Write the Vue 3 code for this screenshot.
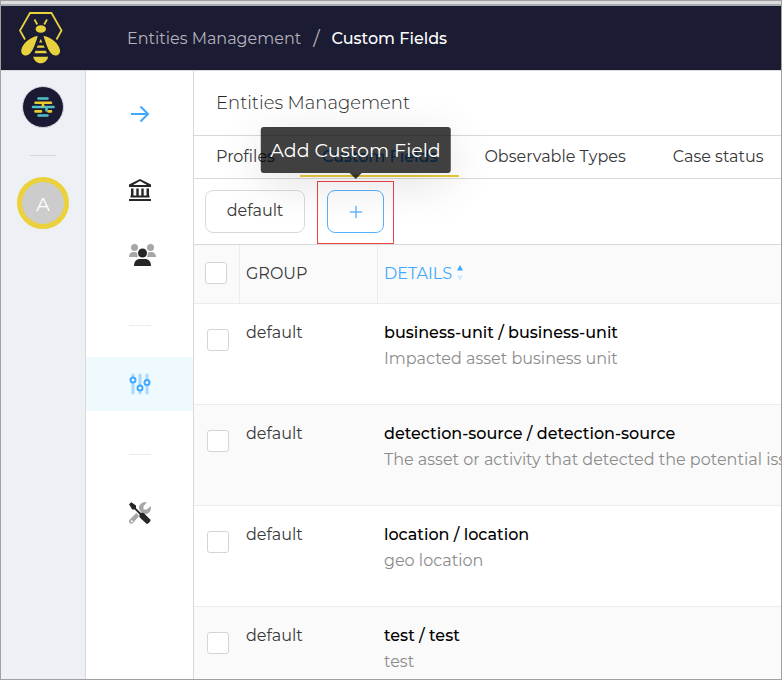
<script setup>
import { ref } from 'vue'

const tabs = ['Profiles', 'Custom Fields', 'Observable Types', 'Case status']
const activeTab = ref('Custom Fields')

const rows = ref([
  { group: 'default', name: 'business-unit / business-unit', description: 'Impacted asset business unit', checked: false },
  { group: 'default', name: 'detection-source / detection-source', description: 'The asset or activity that detected the potential issue', checked: false },
  { group: 'default', name: 'location / location', description: 'geo location', checked: false },
  { group: 'default', name: 'test / test', description: 'test', checked: false },
])
</script>

<template>
  <div class="window">
    <div class="chrome"></div>
    <header class="topbar">
      <a href="#" class="brand" aria-label="Home">
        <svg width="44" height="52" viewBox="0 0 44 52" fill="none">
          <path d="M6 27.500 1 18.500 11 1h21.500L42.500 18.500l-5 9" stroke="#e8d13f" stroke-width="1.800" />
          <path d="m15.500 7.500 2.800 5M28 7.500l-2.800 5" stroke="#e8d13f" stroke-width="1.800" />
          <ellipse cx="21.800" cy="17" rx="5.200" ry="3.800" fill="#e8d13f" />
          <path d="M18.800 24C11 25 3.500 31.500 2.300 38c-.5 3.500 1.700 5.500 4.700 5.500C12.500 43.500 16 33 18.800 24ZM24.500 24C32.300 25 39.800 31.500 41 38c.5 3.500-1.700 5.500-4.700 5.500C30.800 43.500 27.300 33 24.500 24Z" fill="#e8d13f" />
          <path d="m21.700 27 1.600 3.500h-3.200ZM18.700 33.500h6l1 2.300h-8ZM16.500 38.800h10.400l1 2.500H15.500ZM14.200 44.800h15c-1 4-3.700 6.500-7.500 6.500s-6.500-2.500-7.500-6.500Z" fill="#e8d13f" />
        </svg>
      </a>
      <nav class="breadcrumb" aria-label="Breadcrumb">
        <a href="#">Entities Management</a>
        <span class="slash">/</span>
        <span class="current">Custom Fields</span>
      </nav>
    </header>

    <div class="body">
      <aside class="rail">
        <a href="#" class="org" aria-label="Organisation">
          <svg width="42" height="42" viewBox="0 0 42 42">
            <circle cx="21" cy="21" r="20.500" fill="#1a1a35" stroke="#d5d6da" />
            <g stroke-width="2.600" stroke-linecap="round">
              <path d="M16.500 12.500h9M11 21h20.500M16.500 29.500h9M24.500 21v3.500" stroke="#4fc0c4" />
              <path d="M13.500 16.700h15.500M13.500 25.400h5.500M26.500 25.400h2.500M21 17v3" stroke="#eccb2e" />
            </g>
          </svg>
        </a>
        <hr class="rail-line" />
        <button type="button" class="avatar">A</button>
      </aside>

      <nav class="sidebar" aria-label="Administration">
        <a href="#" class="item first" aria-label="Expand">
          <svg width="22" height="22" viewBox="0 0 22 22" fill="none" stroke="#40a9ff" stroke-width="2">
            <path d="M2 11h17M11.500 3.500 19 11l-7.500 7.500" />
          </svg>
        </a>
        <a href="#" class="item" aria-label="Organisations">
          <svg width="22" height="22" viewBox="0 0 22 22" fill="#262626">
            <path fill-rule="evenodd" d="M11 0 0 5.500V8h22V5.500ZM11 2l7 4H4Z" />
            <path d="M2 9.500h2.500V17H2ZM7.300 9.500h2.400V17H7.300ZM12.300 9.500h2.400V17h-2.400ZM17.500 9.500H20V17h-2.500ZM1.500 16.500h19v2h-19ZM0 20h22v2H0Z" />
          </svg>
        </a>
        <a href="#" class="item users" aria-label="Users">
          <svg width="27" height="22" viewBox="0 0 27 22">
            <g fill="#a6a6a6">
              <circle cx="5.500" cy="3.500" r="3.500" />
              <circle cx="21.500" cy="3.500" r="3.500" />
              <path d="M0 13c0-3 2-5 4.500-5H6c1 0 1.700.3 2.300.8-.3 1.600 0 3 .7 4.200ZM27 13c0-3-2-5-4.500-5H21c-1 0-1.700.3-2.300.8.3 1.600 0 3-.7 4.200Z" />
            </g>
            <circle cx="13.500" cy="9" r="4.500" fill="#262626" />
            <path d="M5 22c0-4.500 2.500-7 6-7h5c3.500 0 6 2.500 6 7Z" fill="#262626" />
          </svg>
        </a>
        <hr class="divider" />
        <a href="#" class="item selected" aria-label="Entities Management">
          <svg width="22" height="22" viewBox="0 0 22 22" fill="none">
            <path d="M4 2v18M11 2v18M18 2v18" stroke="#a8d8ff" stroke-width="3" stroke-linecap="round" />
            <g fill="#f0faff" stroke="#40a9ff" stroke-width="2">
              <circle cx="4" cy="7" r="2.500" />
              <circle cx="11" cy="15" r="2.500" />
              <circle cx="18" cy="9.500" r="2.500" />
            </g>
          </svg>
        </a>
        <hr class="divider" />
        <a href="#" class="item" aria-label="Platform tools">
          <svg width="22" height="22" viewBox="0 0 22 22">
            <path d="M10 6C10 2 14 -1 18 .6L14.500 4v3.500H18L21.500 4C23 8 20 12 16 12l-2.500-.5L10.500 8ZM7.300 11 10 14l-6 7C1.500 23 -1.500 20 .8 17.500Z" fill="#a6a6a6" />
            <circle cx="2.800" cy="19.200" r="1" fill="#fff" />
            <path d="m0 2.300 2.300-2L7 3.500v2.700l5 4.800c1.500-.5 2.500-.3 3.500.7l6 6-.2 1.500-2.400 2.500h-1.400L11.300 16c-1-1-1.200-2.400-.7-3.600L5.700 7.500H3.200Z" fill="#262626" />
          </svg>
        </a>
      </nav>

      <main class="content">
        <h1 class="title">Entities Management</h1>
        <nav class="tabs" aria-label="Entity sections">
          <button
            v-for="tab in tabs"
            :key="tab"
            type="button"
            class="tab"
            :class="{ active: tab === activeTab }"
            @click="activeTab = tab"
          >{{ tab }}</button>
        </nav>

        <div class="toolbar">
          <button type="button" class="preset">default</button>
          <div class="highlight">
            <button type="button" class="add" aria-label="Add Custom Field">
              <svg width="12" height="12" viewBox="0 0 12 12" stroke="#69b9fc" stroke-width="1.500">
                <path d="M6 0v12M0 6h12" />
              </svg>
            </button>
            <div class="tooltip" role="tooltip">Add Custom Field</div>
          </div>
        </div>

        <table class="fields">
          <thead>
            <tr>
              <th class="pick"><input type="checkbox" aria-label="Select all" /></th>
              <th class="group">GROUP</th>
              <th class="details">
                <button type="button" class="sort">
                  DETAILS
                  <svg width="6" height="16" viewBox="0 0 6 16">
                    <path d="M3 0 6 5.500H0Z" fill="#40a9ff" />
                    <path d="M3 16 0 10.500h6Z" fill="#d3eafd" />
                  </svg>
                </button>
              </th>
            </tr>
          </thead>
          <tbody>
            <tr v-for="row in rows" :key="row.name">
              <td class="pick"><input v-model="row.checked" type="checkbox" :aria-label="'Select ' + row.name" /></td>
              <td class="group">{{ row.group }}</td>
              <td class="details">
                <div class="name">{{ row.name }}</div>
                <div class="description">{{ row.description }}</div>
              </td>
            </tr>
          </tbody>
        </table>
      </main>
    </div>
  </div>
</template>

<style>
body {
  margin: 0;
  background: #fff;
}
</style>

<style scoped>
.window,
.window * {
  box-sizing: border-box;
}
.window {
  display: flex;
  flex-direction: column;
  height: 100vh;
  overflow: hidden;
  border: 1px solid #a0a0a0;
  background: #fff;
  color: #383838;
  font-family: Montserrat, Inter, sans-serif;
  font-size: 16px;
  font-weight: 400;
  line-height: 26px;
}
button {
  margin: 0;
  padding: 0;
  border: 0;
  background: none;
  color: inherit;
  font: inherit;
  cursor: pointer;
}
a {
  color: inherit;
  text-decoration: none;
}
hr {
  margin: 0;
  border: 0;
}
svg {
  display: block;
}
.chrome {
  flex: none;
  height: 5px;
  background: #dcdcde;
  border-bottom: 2px solid #a8abb0;
}
.topbar {
  flex: none;
  display: flex;
  align-items: center;
  gap: 64px;
  height: 65px;
  padding: 0 18px;
  background: #1b1b33;
  border-bottom: 1px solid #d9d9d9;
}
.breadcrumb {
  display: flex;
  gap: 12px;
  padding-top: 2px;
  color: #b3b3bb;
}
.slash {
  font-size: 19px;
}
.current {
  color: #fff;
  font-weight: 500;
}
.body {
  flex: 1;
  display: flex;
  min-height: 0;
}
.rail {
  flex: none;
  display: flex;
  flex-direction: column;
  align-items: center;
  width: 85px;
  padding-top: 15px;
  background: #edf1f5;
  border-right: 1px solid #d9d9d9;
}
.rail-line {
  width: 26px;
  height: 1px;
  margin: 27px 0 21px;
  background: #d3d6d9;
}
.avatar {
  width: 52px;
  height: 52px;
  padding-top: 4px;
  border: 5px solid #ebd13c;
  border-radius: 50%;
  background: #ccc;
  color: #fff;
  font-size: 19px;
}
.sidebar {
  flex: none;
  width: 108px;
  border-right: 1px solid #d9d9d9;
}
.item {
  display: flex;
  align-items: center;
  justify-content: center;
  height: 54px;
}
.first {
  margin: 16px 0 22px;
}
.users {
  margin-top: 11px;
  padding-left: 5px;
}
.divider {
  width: 22px;
  height: 1px;
  margin: 43px auto 31px;
  background: #ececec;
}
.selected {
  background: #effaff;
}
.content {
  flex: 1;
  min-width: 0;
  overflow: hidden;
}
.title {
  margin: 0;
  padding: 19px 22px;
  border-bottom: 1px solid #d9d9d9;
  color: #262626;
  font-size: 18px;
  font-weight: 300;
}
.tabs {
  display: flex;
  gap: 3px;
  height: 43px;
  border-bottom: 1px solid #d9d9d9;
}
.tab {
  flex: none;
  height: 41px;
  padding: 2px 22px 0;
  border-bottom: 2px solid transparent;
  white-space: nowrap;
}
.tab.active {
  border-bottom-color: #e8cb38;
  color: #1890ff;
  font-weight: 500;
}
.toolbar {
  display: flex;
  align-items: flex-start;
  gap: 12px;
  height: 66px;
  padding: 2px 11px 0;
  border-bottom: 1px solid #d9d9d9;
}
.preset {
  width: 100px;
  height: 43px;
  margin-top: 9px;
  padding-bottom: 1px;
  border: 1px solid #d9d9d9;
  border-radius: 8px;
}
.highlight {
  position: relative;
  padding: 8px 9px 10px;
  border: 1px solid #ef4444;
}
.add {
  display: flex;
  align-items: center;
  justify-content: center;
  width: 57px;
  height: 43px;
  border: 1px solid #57b2fd;
  border-radius: 8px;
}
.tooltip {
  position: absolute;
  bottom: calc(100% + 9px);
  left: 50%;
  transform: translateX(-50%);
  padding: 11px 10px 9px;
  border-radius: 3px;
  background: rgba(0, 0, 0, 0.75);
  box-shadow: 0 10px 48px rgba(0, 0, 0, 0.12);
  color: #fff;
  font-size: 19px;
  white-space: nowrap;
}
.tooltip::after {
  content: "";
  position: absolute;
  top: 100%;
  left: 50%;
  margin-left: -6px;
  border: 6px solid transparent;
  border-top-color: rgba(0, 0, 0, 0.75);
  border-bottom: 0;
}
.fields {
  width: 100%;
  table-layout: fixed;
  border-collapse: separate;
  border-spacing: 0;
}
th {
  height: 59px;
  padding: 0 6px;
  border-bottom: 1px solid #ececec;
  background: #fafafa;
  font-weight: 400;
  text-align: left;
}
th.pick,
th.group {
  border-right: 1px solid #ececec;
}
th.pick {
  width: 46px;
  padding: 0 0 2px 11px;
}
th.group {
  width: 138px;
}
.sort {
  display: flex;
  align-items: center;
  gap: 5px;
  color: #40a9ff;
}
.sort svg {
  margin-bottom: 3px;
}
td {
  height: 101px;
  padding: 16px 6px 0;
  border-bottom: 1px solid #ececec;
  vertical-align: top;
}
td.pick {
  padding: 25px 0 0 13px;
}
tbody tr:nth-child(even) td {
  background: #fafafa;
}
input {
  appearance: none;
  display: block;
  width: 22px;
  height: 22px;
  margin: 0;
  border: 1px solid #d5d5d5;
  border-radius: 3px;
  background: #fff;
}
input:checked {
  background: #40a9ff;
}
.details {
  white-space: nowrap;
}
.name {
  color: #000;
  font-weight: 500;
}
.description {
  color: #8c8c8c;
}
</style>
